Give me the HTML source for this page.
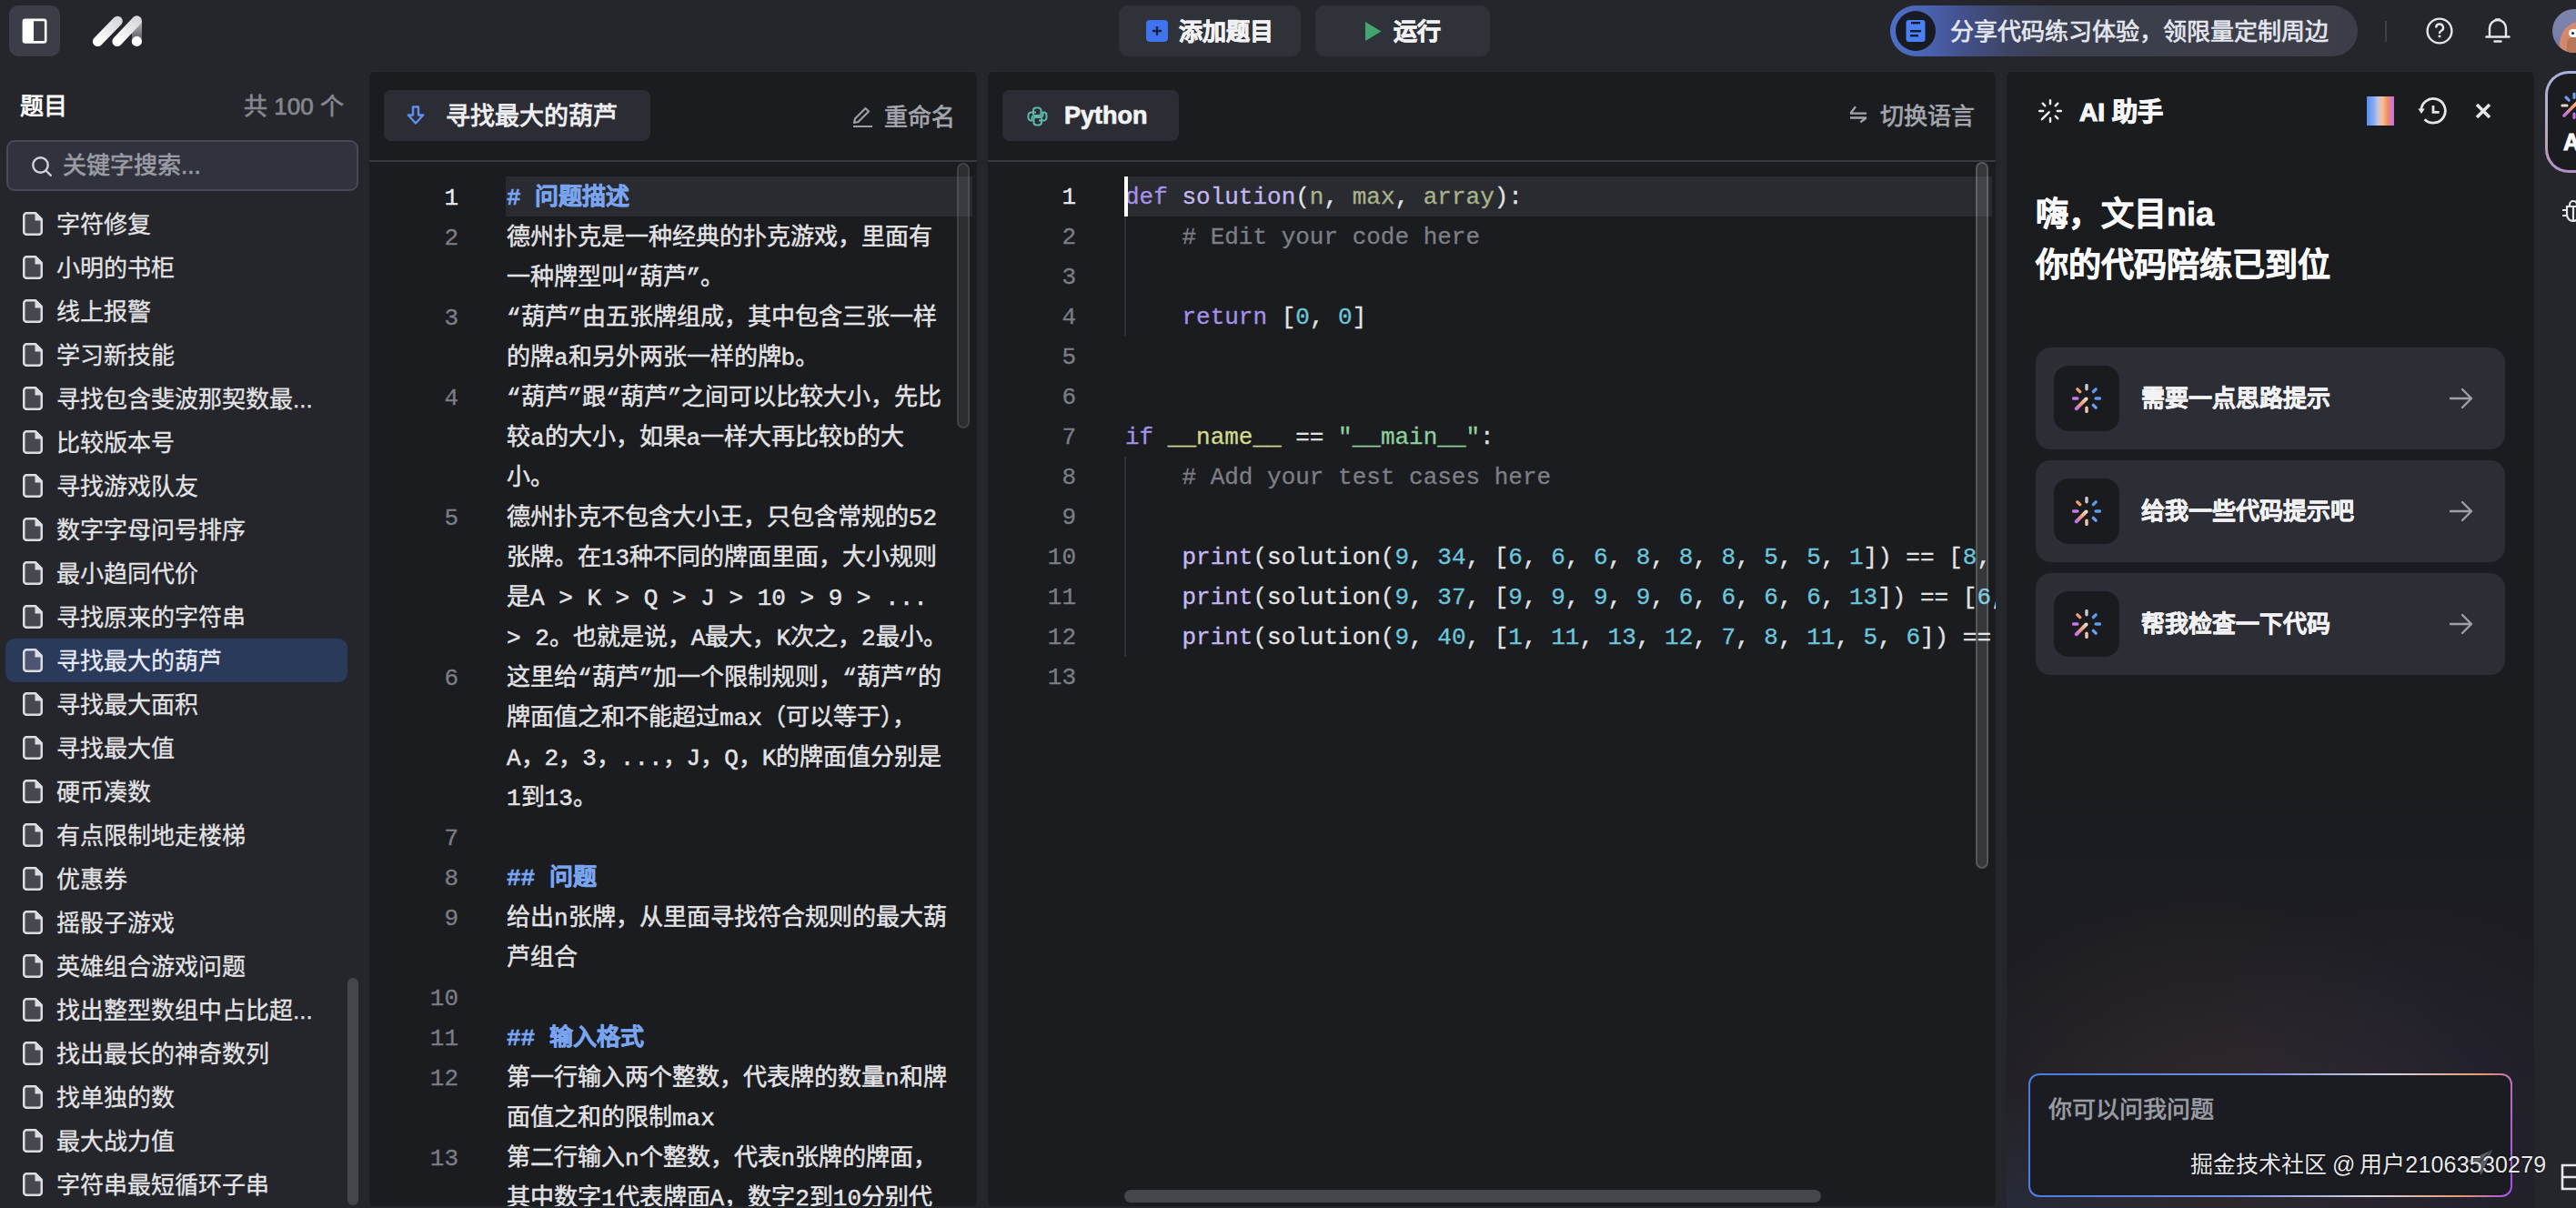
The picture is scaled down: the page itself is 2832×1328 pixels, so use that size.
<!DOCTYPE html>
<html lang="zh-CN"><head><meta charset="utf-8">
<style>
*{margin:0;padding:0;box-sizing:border-box}
html,body{width:2832px;height:1328px;overflow:hidden}
body{position:relative;background:#25262c;font-family:"Liberation Sans",sans-serif;color:#e6e6e8}
.a{position:absolute}
.sw{-webkit-text-stroke-width:0.7px}
.sb{-webkit-text-stroke-width:0.7px}
svg{display:block}
.btn{position:absolute;background:#30323a;border-radius:10px}
.panel{position:absolute;background:#1b1c20;border-radius:6px;overflow:hidden;box-shadow:inset 0 1px 0 #2a2b31}
.tab{position:absolute;background:#2c2d34;border-radius:8px}
.hdiv{position:absolute;left:0;right:0;top:98px;height:2px;background:#393a40}
.list .it{position:absolute;left:6px;width:376px;height:48px;border-radius:10px}
.list .it svg{position:absolute;left:19px;top:11px}
.list .it span{position:absolute;left:56px;top:1px;line-height:48px;font-size:26px;color:#e3e3e5;white-space:nowrap;-webkit-text-stroke-width:0.3px}
.list .it.sel{background:#293a5a}
.list .it.sel path:first-child{fill:#4d5572}
.list .it.sel span{color:#e6e9f6}
.md{position:absolute;left:0;top:118px;width:668px}
.md .r{position:absolute;left:0;height:44px;width:668px;line-height:44px;font-size:26px;font-family:"Liberation Mono",monospace;color:#e3e3e5;white-space:pre;-webkit-text-stroke-width:0.5px}
.md .n{-webkit-text-stroke-width:0.3px}
.md .n{position:absolute;right:570px;top:0;color:#7c7e85;text-align:right}
.md .t{position:absolute;left:151px;top:0}
.md .h{color:#78a4f0;font-weight:bold}
.code{position:absolute;left:0;top:117px;width:1108px}
.code .r{position:absolute;left:0;height:44px;width:1108px;line-height:44px;font-size:26px;font-family:"Liberation Mono",monospace;color:#e3e3e5;white-space:pre;-webkit-text-stroke-width:0.3px}
.code .n{position:absolute;right:1011px;top:0;color:#7c7e85;text-align:right}
.code .t{position:absolute;left:151px;top:0}
.kw{color:#a491e8}
.fn{color:#c4b8f3}
.pa{color:#a9b38a}
.cm{color:#7d7f86}
.nu{color:#6cc6dc}
.dn{color:#d3d88f}
.st{color:#8fcf9c}
.card{position:absolute;left:32px;width:516px;height:112px;background:#2c2d35;border-radius:16px}
.card .ib{position:absolute;left:20px;top:20px;width:72px;height:72px;border-radius:16px;background:#1a1b1f}
.card .ib svg{position:absolute;left:20px;top:20px}
.card span{position:absolute;left:116px;top:0;line-height:112px;font-size:26px;font-weight:bold;color:#f2f2f4;-webkit-text-stroke-width:0.5px}
.card .ar{position:absolute;left:454px;top:43px}
</style></head>
<body>

<!-- ===== TOP BAR ===== -->
<div class="btn" style="left:10px;top:6px;width:56px;height:56px;background:#3c3e47;border-radius:10px">
  <svg class="a" style="left:14px;top:14px" width="28" height="28" viewBox="0 0 28 28">
    <rect x="1.9" y="1.9" width="24.3" height="24.5" rx="2" fill="none" stroke="#fff" stroke-width="2.6"/>
    <rect x="1" y="1" width="12" height="26" rx="1.5" fill="#fff"/>
  </svg>
</div>
<svg class="a" style="left:95px;top:12px" width="70" height="44" viewBox="95 12 70 44">
  <defs>
    <linearGradient id="lg1" x1="0" y1="1" x2="1" y2="0"><stop offset="0" stop-color="#ffffff"/><stop offset="1" stop-color="#d9d9dd"/></linearGradient>
    <linearGradient id="lg2" x1="0" y1="0" x2="0" y2="1"><stop offset="0" stop-color="#b8b8bc"/><stop offset="1" stop-color="#55565b"/></linearGradient>
  </defs>
  <rect x="145" y="23" width="11" height="22" fill="url(#lg2)"/>
  <line x1="107.4" y1="45.6" x2="129.3" y2="23.2" stroke="url(#lg1)" stroke-width="11" stroke-linecap="round"/>
  <line x1="128.9" y1="45.6" x2="150.4" y2="22.8" stroke="url(#lg1)" stroke-width="11" stroke-linecap="round"/>
  <circle cx="150.4" cy="45.4" r="5.6" fill="#fff"/>
</svg>

<div class="btn" style="left:1230px;top:6px;width:200px;height:56px">
  <div class="a" style="left:30px;top:16px;width:24px;height:24px;background:#3f74ee;border-radius:4px"></div>
  <svg class="a" style="left:30px;top:16px" width="24" height="24" viewBox="0 0 24 24"><path d="M12 7v10M7 12h10" stroke="#1b2444" stroke-width="2.4"/></svg>
  <span class="a sb" style="left:66px;top:1px;line-height:56px;font-size:26px;font-weight:bold;color:#f2f2f4">添加题目</span>
</div>
<div class="btn" style="left:1446px;top:6px;width:192px;height:56px">
  <svg class="a" style="left:55px;top:18px" width="18" height="21" viewBox="0 0 18 21"><path d="M0 0L17.5 10.5L0 21Z" fill="#43a46f"/></svg>
  <span class="a sb" style="left:86px;top:1px;line-height:56px;font-size:26px;font-weight:bold;color:#f2f2f4">运行</span>
</div>

<div class="a" style="left:2078px;top:6px;width:514px;height:56px;border-radius:28px;background:linear-gradient(90deg,#4d6fca 0%,#4a64b4 7%,#42508a 16%,#3d4462 26%,#3b3e4d 36%,#3c3e47 100%)">
  <div class="a" style="left:6px;top:6px;width:44px;height:44px;border-radius:22px;background:#181a24"></div>
  <svg class="a" style="left:17px;top:15px" width="22" height="25" viewBox="0 0 22 25">
    <rect x="0.5" y="1" width="21" height="24" rx="3" fill="#4a80f6"/>
    <rect x="6" y="3" width="10" height="2.4" fill="#181a24"/>
    <rect x="5" y="12" width="12" height="2.4" fill="#181a24"/>
    <rect x="5" y="17" width="9" height="2.4" fill="#181a24"/>
  </svg>
  <span class="a sw" style="left:66px;top:1px;line-height:56px;font-size:26px;color:#e4e7ef">分享代码练习体验，领限量定制周边</span>
</div>
<div class="a" style="left:2622px;top:23px;width:2px;height:23px;background:#3e4047"></div>
<svg class="a" style="left:2666px;top:18px" width="32" height="32" viewBox="0 0 32 32">
  <circle cx="16" cy="16" r="13.4" fill="none" stroke="#e6e6e8" stroke-width="2.4"/>
  <path d="M12.2 12.4a3.9 3.9 0 1 1 5.8 3.4c-1.2.7-2 1.4-2 2.6v.6" fill="none" stroke="#e6e6e8" stroke-width="2.4" stroke-linecap="butt"/>
  <rect x="14.7" y="20.6" width="2.6" height="2.6" fill="#e6e6e8"/>
</svg>
<svg class="a" style="left:2731px;top:18px" width="30" height="30" viewBox="0 0 30 30">
  <path d="M6 22V13a9 9 0 0 1 18 0v9" fill="none" stroke="#e6e6e8" stroke-width="2.4"/>
  <path d="M2.5 22.5h25" stroke="#e6e6e8" stroke-width="2.4" stroke-linecap="round"/>
  <path d="M11.5 27.5h7" stroke="#e6e6e8" stroke-width="2.4" stroke-linecap="round"/>
  <path d="M13 3.5h4" stroke="#e6e6e8" stroke-width="2.4" stroke-linecap="round"/>
</svg>
<div class="a" style="left:2806px;top:10px;width:48px;height:48px;border-radius:24px;background:linear-gradient(160deg,#8085b0,#6f7aa0);overflow:hidden">
  <div class="a" style="left:8px;top:14px;width:44px;height:50px;border-radius:50%;background:#d3896a"></div>
  <div class="a" style="left:16px;top:30px;width:16px;height:24px;border-radius:8px;background:#b97658"></div>
  <div class="a" style="left:18px;top:22px;width:14px;height:9px;border-radius:5px;background:#fff"></div>
  <div class="a" style="left:21px;top:25px;width:3px;height:3px;border-radius:2px;background:#222"></div>
</div>

<!-- ===== SIDEBAR ===== -->
<span class="a" style="left:22px;top:99px;line-height:36px;font-size:26px;font-weight:bold;color:#fafafa">题目</span>
<span class="a sw" style="left:268px;top:99px;line-height:36px;font-size:26px;color:#85878e">共 100 个</span>
<div class="a" style="left:7px;top:154px;width:387px;height:56px;border-radius:9px;background:#30333d;border:2px solid #474a54"></div>
<svg class="a" style="left:34px;top:171px" width="24" height="24" viewBox="0 0 24 24">
  <circle cx="10.5" cy="10.5" r="8.2" fill="none" stroke="#d0d1d5" stroke-width="2.4"/>
  <path d="M17 17l4.8 4.8" stroke="#d0d1d5" stroke-width="2.4" stroke-linecap="round"/>
</svg>
<span class="a sw" style="left:69px;top:154px;line-height:56px;font-size:26px;color:#9a9ca3">关键字搜索...</span>

<div class="list">
<div class="it" style="top:222px"><svg width="22" height="26" viewBox="0 0 22 26"><path d="M4.25 1.25H14L20.75 8V21.75A3 3 0 0 1 17.75 24.75H4.25A3 3 0 0 1 1.25 21.75V4.25A3 3 0 0 1 4.25 1.25Z" fill="#47484f" stroke="#dcdde2" stroke-width="2.5" stroke-linejoin="round"/><path d="M13.5 1.5L20.5 8.5V9.5H13.5Z" fill="#dcdde2"/></svg><span>字符修复</span></div>
<div class="it" style="top:270px"><svg width="22" height="26" viewBox="0 0 22 26"><path d="M4.25 1.25H14L20.75 8V21.75A3 3 0 0 1 17.75 24.75H4.25A3 3 0 0 1 1.25 21.75V4.25A3 3 0 0 1 4.25 1.25Z" fill="#47484f" stroke="#dcdde2" stroke-width="2.5" stroke-linejoin="round"/><path d="M13.5 1.5L20.5 8.5V9.5H13.5Z" fill="#dcdde2"/></svg><span>小明的书柜</span></div>
<div class="it" style="top:318px"><svg width="22" height="26" viewBox="0 0 22 26"><path d="M4.25 1.25H14L20.75 8V21.75A3 3 0 0 1 17.75 24.75H4.25A3 3 0 0 1 1.25 21.75V4.25A3 3 0 0 1 4.25 1.25Z" fill="#47484f" stroke="#dcdde2" stroke-width="2.5" stroke-linejoin="round"/><path d="M13.5 1.5L20.5 8.5V9.5H13.5Z" fill="#dcdde2"/></svg><span>线上报警</span></div>
<div class="it" style="top:366px"><svg width="22" height="26" viewBox="0 0 22 26"><path d="M4.25 1.25H14L20.75 8V21.75A3 3 0 0 1 17.75 24.75H4.25A3 3 0 0 1 1.25 21.75V4.25A3 3 0 0 1 4.25 1.25Z" fill="#47484f" stroke="#dcdde2" stroke-width="2.5" stroke-linejoin="round"/><path d="M13.5 1.5L20.5 8.5V9.5H13.5Z" fill="#dcdde2"/></svg><span>学习新技能</span></div>
<div class="it" style="top:414px"><svg width="22" height="26" viewBox="0 0 22 26"><path d="M4.25 1.25H14L20.75 8V21.75A3 3 0 0 1 17.75 24.75H4.25A3 3 0 0 1 1.25 21.75V4.25A3 3 0 0 1 4.25 1.25Z" fill="#47484f" stroke="#dcdde2" stroke-width="2.5" stroke-linejoin="round"/><path d="M13.5 1.5L20.5 8.5V9.5H13.5Z" fill="#dcdde2"/></svg><span>寻找包含斐波那契数最...</span></div>
<div class="it" style="top:462px"><svg width="22" height="26" viewBox="0 0 22 26"><path d="M4.25 1.25H14L20.75 8V21.75A3 3 0 0 1 17.75 24.75H4.25A3 3 0 0 1 1.25 21.75V4.25A3 3 0 0 1 4.25 1.25Z" fill="#47484f" stroke="#dcdde2" stroke-width="2.5" stroke-linejoin="round"/><path d="M13.5 1.5L20.5 8.5V9.5H13.5Z" fill="#dcdde2"/></svg><span>比较版本号</span></div>
<div class="it" style="top:510px"><svg width="22" height="26" viewBox="0 0 22 26"><path d="M4.25 1.25H14L20.75 8V21.75A3 3 0 0 1 17.75 24.75H4.25A3 3 0 0 1 1.25 21.75V4.25A3 3 0 0 1 4.25 1.25Z" fill="#47484f" stroke="#dcdde2" stroke-width="2.5" stroke-linejoin="round"/><path d="M13.5 1.5L20.5 8.5V9.5H13.5Z" fill="#dcdde2"/></svg><span>寻找游戏队友</span></div>
<div class="it" style="top:558px"><svg width="22" height="26" viewBox="0 0 22 26"><path d="M4.25 1.25H14L20.75 8V21.75A3 3 0 0 1 17.75 24.75H4.25A3 3 0 0 1 1.25 21.75V4.25A3 3 0 0 1 4.25 1.25Z" fill="#47484f" stroke="#dcdde2" stroke-width="2.5" stroke-linejoin="round"/><path d="M13.5 1.5L20.5 8.5V9.5H13.5Z" fill="#dcdde2"/></svg><span>数字字母问号排序</span></div>
<div class="it" style="top:606px"><svg width="22" height="26" viewBox="0 0 22 26"><path d="M4.25 1.25H14L20.75 8V21.75A3 3 0 0 1 17.75 24.75H4.25A3 3 0 0 1 1.25 21.75V4.25A3 3 0 0 1 4.25 1.25Z" fill="#47484f" stroke="#dcdde2" stroke-width="2.5" stroke-linejoin="round"/><path d="M13.5 1.5L20.5 8.5V9.5H13.5Z" fill="#dcdde2"/></svg><span>最小趋同代价</span></div>
<div class="it" style="top:654px"><svg width="22" height="26" viewBox="0 0 22 26"><path d="M4.25 1.25H14L20.75 8V21.75A3 3 0 0 1 17.75 24.75H4.25A3 3 0 0 1 1.25 21.75V4.25A3 3 0 0 1 4.25 1.25Z" fill="#47484f" stroke="#dcdde2" stroke-width="2.5" stroke-linejoin="round"/><path d="M13.5 1.5L20.5 8.5V9.5H13.5Z" fill="#dcdde2"/></svg><span>寻找原来的字符串</span></div>
<div class="it sel" style="top:702px"><svg width="22" height="26" viewBox="0 0 22 26"><path d="M4.25 1.25H14L20.75 8V21.75A3 3 0 0 1 17.75 24.75H4.25A3 3 0 0 1 1.25 21.75V4.25A3 3 0 0 1 4.25 1.25Z" fill="#47484f" stroke="#dcdde2" stroke-width="2.5" stroke-linejoin="round"/><path d="M13.5 1.5L20.5 8.5V9.5H13.5Z" fill="#dcdde2"/></svg><span>寻找最大的葫芦</span></div>
<div class="it" style="top:750px"><svg width="22" height="26" viewBox="0 0 22 26"><path d="M4.25 1.25H14L20.75 8V21.75A3 3 0 0 1 17.75 24.75H4.25A3 3 0 0 1 1.25 21.75V4.25A3 3 0 0 1 4.25 1.25Z" fill="#47484f" stroke="#dcdde2" stroke-width="2.5" stroke-linejoin="round"/><path d="M13.5 1.5L20.5 8.5V9.5H13.5Z" fill="#dcdde2"/></svg><span>寻找最大面积</span></div>
<div class="it" style="top:798px"><svg width="22" height="26" viewBox="0 0 22 26"><path d="M4.25 1.25H14L20.75 8V21.75A3 3 0 0 1 17.75 24.75H4.25A3 3 0 0 1 1.25 21.75V4.25A3 3 0 0 1 4.25 1.25Z" fill="#47484f" stroke="#dcdde2" stroke-width="2.5" stroke-linejoin="round"/><path d="M13.5 1.5L20.5 8.5V9.5H13.5Z" fill="#dcdde2"/></svg><span>寻找最大值</span></div>
<div class="it" style="top:846px"><svg width="22" height="26" viewBox="0 0 22 26"><path d="M4.25 1.25H14L20.75 8V21.75A3 3 0 0 1 17.75 24.75H4.25A3 3 0 0 1 1.25 21.75V4.25A3 3 0 0 1 4.25 1.25Z" fill="#47484f" stroke="#dcdde2" stroke-width="2.5" stroke-linejoin="round"/><path d="M13.5 1.5L20.5 8.5V9.5H13.5Z" fill="#dcdde2"/></svg><span>硬币凑数</span></div>
<div class="it" style="top:894px"><svg width="22" height="26" viewBox="0 0 22 26"><path d="M4.25 1.25H14L20.75 8V21.75A3 3 0 0 1 17.75 24.75H4.25A3 3 0 0 1 1.25 21.75V4.25A3 3 0 0 1 4.25 1.25Z" fill="#47484f" stroke="#dcdde2" stroke-width="2.5" stroke-linejoin="round"/><path d="M13.5 1.5L20.5 8.5V9.5H13.5Z" fill="#dcdde2"/></svg><span>有点限制地走楼梯</span></div>
<div class="it" style="top:942px"><svg width="22" height="26" viewBox="0 0 22 26"><path d="M4.25 1.25H14L20.75 8V21.75A3 3 0 0 1 17.75 24.75H4.25A3 3 0 0 1 1.25 21.75V4.25A3 3 0 0 1 4.25 1.25Z" fill="#47484f" stroke="#dcdde2" stroke-width="2.5" stroke-linejoin="round"/><path d="M13.5 1.5L20.5 8.5V9.5H13.5Z" fill="#dcdde2"/></svg><span>优惠券</span></div>
<div class="it" style="top:990px"><svg width="22" height="26" viewBox="0 0 22 26"><path d="M4.25 1.25H14L20.75 8V21.75A3 3 0 0 1 17.75 24.75H4.25A3 3 0 0 1 1.25 21.75V4.25A3 3 0 0 1 4.25 1.25Z" fill="#47484f" stroke="#dcdde2" stroke-width="2.5" stroke-linejoin="round"/><path d="M13.5 1.5L20.5 8.5V9.5H13.5Z" fill="#dcdde2"/></svg><span>摇骰子游戏</span></div>
<div class="it" style="top:1038px"><svg width="22" height="26" viewBox="0 0 22 26"><path d="M4.25 1.25H14L20.75 8V21.75A3 3 0 0 1 17.75 24.75H4.25A3 3 0 0 1 1.25 21.75V4.25A3 3 0 0 1 4.25 1.25Z" fill="#47484f" stroke="#dcdde2" stroke-width="2.5" stroke-linejoin="round"/><path d="M13.5 1.5L20.5 8.5V9.5H13.5Z" fill="#dcdde2"/></svg><span>英雄组合游戏问题</span></div>
<div class="it" style="top:1086px"><svg width="22" height="26" viewBox="0 0 22 26"><path d="M4.25 1.25H14L20.75 8V21.75A3 3 0 0 1 17.75 24.75H4.25A3 3 0 0 1 1.25 21.75V4.25A3 3 0 0 1 4.25 1.25Z" fill="#47484f" stroke="#dcdde2" stroke-width="2.5" stroke-linejoin="round"/><path d="M13.5 1.5L20.5 8.5V9.5H13.5Z" fill="#dcdde2"/></svg><span>找出整型数组中占比超...</span></div>
<div class="it" style="top:1134px"><svg width="22" height="26" viewBox="0 0 22 26"><path d="M4.25 1.25H14L20.75 8V21.75A3 3 0 0 1 17.75 24.75H4.25A3 3 0 0 1 1.25 21.75V4.25A3 3 0 0 1 4.25 1.25Z" fill="#47484f" stroke="#dcdde2" stroke-width="2.5" stroke-linejoin="round"/><path d="M13.5 1.5L20.5 8.5V9.5H13.5Z" fill="#dcdde2"/></svg><span>找出最长的神奇数列</span></div>
<div class="it" style="top:1182px"><svg width="22" height="26" viewBox="0 0 22 26"><path d="M4.25 1.25H14L20.75 8V21.75A3 3 0 0 1 17.75 24.75H4.25A3 3 0 0 1 1.25 21.75V4.25A3 3 0 0 1 4.25 1.25Z" fill="#47484f" stroke="#dcdde2" stroke-width="2.5" stroke-linejoin="round"/><path d="M13.5 1.5L20.5 8.5V9.5H13.5Z" fill="#dcdde2"/></svg><span>找单独的数</span></div>
<div class="it" style="top:1230px"><svg width="22" height="26" viewBox="0 0 22 26"><path d="M4.25 1.25H14L20.75 8V21.75A3 3 0 0 1 17.75 24.75H4.25A3 3 0 0 1 1.25 21.75V4.25A3 3 0 0 1 4.25 1.25Z" fill="#47484f" stroke="#dcdde2" stroke-width="2.5" stroke-linejoin="round"/><path d="M13.5 1.5L20.5 8.5V9.5H13.5Z" fill="#dcdde2"/></svg><span>最大战力值</span></div>
<div class="it" style="top:1278px"><svg width="22" height="26" viewBox="0 0 22 26"><path d="M4.25 1.25H14L20.75 8V21.75A3 3 0 0 1 17.75 24.75H4.25A3 3 0 0 1 1.25 21.75V4.25A3 3 0 0 1 4.25 1.25Z" fill="#47484f" stroke="#dcdde2" stroke-width="2.5" stroke-linejoin="round"/><path d="M13.5 1.5L20.5 8.5V9.5H13.5Z" fill="#dcdde2"/></svg><span>字符串最短循环子串</span></div>
</div>

<div class="a" style="left:382px;top:1075px;width:12px;height:250px;border-radius:6px;background:#45464c"></div>

<!-- ===== PANEL 1 (markdown) ===== -->
<div class="panel" style="left:406px;top:78px;width:668px;height:1248px">
  <div class="tab" style="left:16px;top:21px;width:293px;height:56px">
    <svg class="a" style="left:23px;top:16px" width="24" height="24" viewBox="0 0 24 24"><path d="M9 2.5h6v9h5.2L12 20.5 3.8 11.5H9z" fill="none" stroke="#5d8ff0" stroke-width="2.4" stroke-linejoin="round"/></svg>
    <span class="a" style="left:68px;top:1px;line-height:56px;font-size:27px;font-weight:bold;color:#eeeef0">寻找最大的葫芦</span>
  </div>
  <svg class="a" style="left:530px;top:38px" width="25" height="25" viewBox="0 0 25 25"><path d="M3 19l1-4.5L15.5 3l3.5 3.5L7.5 18z" fill="none" stroke="#9c9ea5" stroke-width="2.2" stroke-linejoin="round"/><path d="M2 23h21" stroke="#9c9ea5" stroke-width="2.2"/></svg>
  <span class="a sw" style="left:566px;top:23px;line-height:56px;font-size:26px;color:#a4a6ad">重命名</span>
  <div class="hdiv"></div>
  <div class="a" style="left:150px;top:116px;width:513px;height:44px;background:#2a2b31"></div>
  <div class="a" style="left:646px;top:101px;width:14px;height:292px;border-radius:7px;background:rgba(255,255,255,0.08);border:2px solid rgba(255,255,255,0.10)"></div>
  <div class="md" id="md">
<div class="r" style="top:0px"><span class="n" style="color:#ececee">1</span><span class="t"><span class="h"># 问题描述</span></span></div>
<div class="r" style="top:44px"><span class="n">2</span><span class="t">德州扑克是一种经典的扑克游戏，里面有</span></div>
<div class="r" style="top:88px"><span class="n"></span><span class="t">一种牌型叫“葫芦”。</span></div>
<div class="r" style="top:132px"><span class="n">3</span><span class="t">“葫芦”由五张牌组成，其中包含三张一样</span></div>
<div class="r" style="top:176px"><span class="n"></span><span class="t">的牌a和另外两张一样的牌b。</span></div>
<div class="r" style="top:220px"><span class="n">4</span><span class="t">“葫芦”跟“葫芦”之间可以比较大小，先比</span></div>
<div class="r" style="top:264px"><span class="n"></span><span class="t">较a的大小，如果a一样大再比较b的大</span></div>
<div class="r" style="top:308px"><span class="n"></span><span class="t">小。</span></div>
<div class="r" style="top:352px"><span class="n">5</span><span class="t">德州扑克不包含大小王，只包含常规的52</span></div>
<div class="r" style="top:396px"><span class="n"></span><span class="t">张牌。在13种不同的牌面里面，大小规则</span></div>
<div class="r" style="top:440px"><span class="n"></span><span class="t">是A &gt; K &gt; Q &gt; J &gt; 10 &gt; 9 &gt; ...</span></div>
<div class="r" style="top:484px"><span class="n"></span><span class="t">&gt; 2。也就是说，A最大，K次之，2最小。</span></div>
<div class="r" style="top:528px"><span class="n">6</span><span class="t">这里给“葫芦”加一个限制规则，“葫芦”的</span></div>
<div class="r" style="top:572px"><span class="n"></span><span class="t">牌面值之和不能超过max（可以等于），</span></div>
<div class="r" style="top:616px"><span class="n"></span><span class="t">A，2，3，...，J，Q，K的牌面值分别是</span></div>
<div class="r" style="top:660px"><span class="n"></span><span class="t">1到13。</span></div>
<div class="r" style="top:704px"><span class="n">7</span><span class="t"></span></div>
<div class="r" style="top:748px"><span class="n">8</span><span class="t"><span class="h">## 问题</span></span></div>
<div class="r" style="top:792px"><span class="n">9</span><span class="t">给出n张牌，从里面寻找符合规则的最大葫</span></div>
<div class="r" style="top:836px"><span class="n"></span><span class="t">芦组合</span></div>
<div class="r" style="top:880px"><span class="n">10</span><span class="t"></span></div>
<div class="r" style="top:924px"><span class="n">11</span><span class="t"><span class="h">## 输入格式</span></span></div>
<div class="r" style="top:968px"><span class="n">12</span><span class="t">第一行输入两个整数，代表牌的数量n和牌</span></div>
<div class="r" style="top:1012px"><span class="n"></span><span class="t">面值之和的限制max</span></div>
<div class="r" style="top:1056px"><span class="n">13</span><span class="t">第二行输入n个整数，代表n张牌的牌面，</span></div>
<div class="r" style="top:1100px"><span class="n"></span><span class="t">其中数字1代表牌面A，数字2到10分别代</span></div>
</div>
</div>

<!-- ===== PANEL 2 (code) ===== -->
<div class="panel" style="left:1086px;top:78px;width:1108px;height:1248px">
  <div class="tab" style="left:16px;top:21px;width:194px;height:56px">
    <svg class="a" style="left:27px;top:18px" width="23" height="22" viewBox="0 0 23 22"><g fill="none" stroke="#5fb8b0" stroke-width="2" stroke-linejoin="round"><path d="M7 9V4.5A3 3 0 0 1 10 1.5h2.5A3 3 0 0 1 15.5 4.5V8a2 2 0 0 1-2 2H8.5A3 3 0 0 0 5.5 13v2.5H4.5A3 3 0 0 1 1.5 12.5V9.5A3 3 0 0 1 4.5 6.5H10"/><path d="M16 13v4.5a3 3 0 0 1-3 3H10.5a3 3 0 0 1-3-3V14a2 2 0 0 1 2-2h5a3 3 0 0 0 3-3V6.5h1a3 3 0 0 1 3 3v3a3 3 0 0 1-3 3H13"/></g></svg>
    <span class="a sb" style="left:68px;top:0;line-height:56px;font-size:27px;font-weight:bold;color:#f4f4f6">Python</span>
  </div>
  <svg class="a" style="left:944px;top:34px" width="26" height="26" viewBox="0 0 26 26"><path d="M4 12.6H22M4.3 12.6L10 5.3M4 17.5H22M21.7 17.5L15.3 22.4" fill="none" stroke="#a2a4ab" stroke-width="2.3"/></svg>
  <span class="a sw" style="left:981px;top:22px;line-height:56px;font-size:26px;color:#a4a6ad">切换语言</span>
  <div class="hdiv"></div>
  <div class="a" style="left:150px;top:116px;width:954px;height:44px;background:#2a2b31"></div>
  <div class="a" style="left:150px;top:160px;width:2px;height:131px;background:#303137"></div>
  <div class="a" style="left:150px;top:424px;width:2px;height:220px;background:#303137"></div>
  <div class="code" id="code">
<div class="r" style="top:0px"><span class="n" style="color:#ececee">1</span><span class="t"><span class="kw">def</span> <span class="fn">solution</span>(<span class="pa">n</span>, <span class="pa">max</span>, <span class="pa">array</span>):</span></div>
<div class="r" style="top:44px"><span class="n">2</span><span class="t">    <span class="cm"># Edit your code here</span></span></div>
<div class="r" style="top:88px"><span class="n">3</span><span class="t"></span></div>
<div class="r" style="top:132px"><span class="n">4</span><span class="t">    <span class="kw">return</span> [<span class="nu">0</span>, <span class="nu">0</span>]</span></div>
<div class="r" style="top:176px"><span class="n">5</span><span class="t"></span></div>
<div class="r" style="top:220px"><span class="n">6</span><span class="t"></span></div>
<div class="r" style="top:264px"><span class="n">7</span><span class="t"><span class="kw">if</span> <span class="dn">__name__</span> == <span class="st">"__main__"</span>:</span></div>
<div class="r" style="top:308px"><span class="n">8</span><span class="t">    <span class="cm"># Add your test cases here</span></span></div>
<div class="r" style="top:352px"><span class="n">9</span><span class="t"></span></div>
<div class="r" style="top:396px"><span class="n">10</span><span class="t">    <span class="fn">print</span>(solution(<span class="nu">9</span>, <span class="nu">34</span>, [<span class="nu">6</span>, <span class="nu">6</span>, <span class="nu">6</span>, <span class="nu">8</span>, <span class="nu">8</span>, <span class="nu">8</span>, <span class="nu">5</span>, <span class="nu">5</span>, <span class="nu">1</span>]) == [<span class="nu">8</span>, <span class="nu">5</span>])</span></div>
<div class="r" style="top:440px"><span class="n">11</span><span class="t">    <span class="fn">print</span>(solution(<span class="nu">9</span>, <span class="nu">37</span>, [<span class="nu">9</span>, <span class="nu">9</span>, <span class="nu">9</span>, <span class="nu">9</span>, <span class="nu">6</span>, <span class="nu">6</span>, <span class="nu">6</span>, <span class="nu">6</span>, <span class="nu">13</span>]) == [<span class="nu">6</span>, <span class="nu">9</span>])</span></div>
<div class="r" style="top:484px"><span class="n">12</span><span class="t">    <span class="fn">print</span>(solution(<span class="nu">9</span>, <span class="nu">40</span>, [<span class="nu">1</span>, <span class="nu">11</span>, <span class="nu">13</span>, <span class="nu">12</span>, <span class="nu">7</span>, <span class="nu">8</span>, <span class="nu">11</span>, <span class="nu">5</span>, <span class="nu">6</span>]) == [<span class="nu">0</span>, <span class="nu">0</span>])</span></div>
<div class="r" style="top:528px"><span class="n">13</span><span class="t"></span></div>
</div>
  <div class="a" style="left:150px;top:116px;width:4px;height:44px;background:#fff"></div>
  <div class="a" style="left:1086px;top:100px;width:14px;height:777px;border-radius:7px;background:rgba(255,255,255,0.12);border:2px solid rgba(255,255,255,0.16)"></div>
  <div class="a" style="left:150px;top:1230px;width:766px;height:14px;border-radius:7px;background:#45464b"></div>
</div>

<!-- ===== AI PANEL ===== -->
<div class="panel" style="left:2206px;top:78px;width:580px;height:1260px;border-radius:6px 6px 0 0;background:radial-gradient(ellipse 300px 260px at 38% 92%,rgba(64,50,54,0.55),rgba(64,50,54,0) 100%),radial-gradient(ellipse 260px 260px at 76% 92%,rgba(52,44,70,0.38),rgba(52,44,70,0) 100%),radial-gradient(ellipse 220px 140px at 0% 100%,rgba(50,70,110,0.3),rgba(50,70,110,0) 100%),linear-gradient(180deg,#1b1c20 0%,#1b1c20 62%,#1f1f25 100%)">
  <svg class="a" style="left:34px;top:30px" width="28" height="28" viewBox="0 0 32 32" id="sparkw"><g stroke="#f0f0f2" stroke-width="2.8" stroke-linecap="round"><path d="M16 2.5v4.5M29.5 16h-4.5M16 29.5v-4.5M2.5 16h4.5M25.5 6.5l-3 3M25.5 25.5l-3-3M6.5 6.5l3 3M5.5 26.5l9-9"/></g></svg>
  <span class="a sb" style="left:80px;top:26px;line-height:40px;font-size:28px;font-weight:bold;-webkit-text-stroke-width:1.2px;color:#f6f6f8">AI 助手</span>
  <div class="a" style="left:396px;top:28px;width:30px;height:32px;background:linear-gradient(90deg,#5a8cf5 0%,#86aaf2 25%,#c9c6dc 42%,#f6c08e 58%,#f08c62 76%,#c470f2 100%)"></div>
  <svg class="a" style="left:450px;top:26px" width="34" height="34" viewBox="0 0 34 34"><path d="M9.6 27.2A13.3 13.3 0 1 0 5.7 17.8" fill="none" stroke="#e6e6e8" stroke-width="2.8"/><path d="M2.4 15.6h7.4L6 21z" fill="#e6e6e8"/><path d="M19 12v7.4h6.6" fill="none" stroke="#e6e6e8" stroke-width="2.8"/></svg>
  <svg class="a" style="left:514px;top:34px" width="20" height="20" viewBox="0 0 20 20"><path d="M3 3L17 17M17 3L3 17" stroke="#e6e6e8" stroke-width="3.6"/></svg>
  <div class="a sb" style="left:32px;top:130px;font-size:36px;font-weight:bold;line-height:56px;color:#fafafa;white-space:nowrap">嗨，文目nia<br>你的代码陪练已到位</div>

  <div class="card" style="top:304px"><div class="ib"><svg width="32" height="32" viewBox="1 1 30 30"><use href="#sparkc"/></svg></div><span>需要一点思路提示</span><svg class="ar" width="28" height="26" viewBox="0 0 28 26"><path d="M2 13h23M15 3l10 10-10 10" fill="none" stroke="#9fa1a8" stroke-width="2.4" stroke-linecap="round" stroke-linejoin="round"/></svg></div>
  <div class="card" style="top:428px"><div class="ib"><svg width="32" height="32" viewBox="1 1 30 30"><use href="#sparkc"/></svg></div><span>给我一些代码提示吧</span><svg class="ar" width="28" height="26" viewBox="0 0 28 26"><path d="M2 13h23M15 3l10 10-10 10" fill="none" stroke="#9fa1a8" stroke-width="2.4" stroke-linecap="round" stroke-linejoin="round"/></svg></div>
  <div class="card" style="top:552px"><div class="ib"><svg width="32" height="32" viewBox="1 1 30 30"><use href="#sparkc"/></svg></div><span>帮我检查一下代码</span><svg class="ar" width="28" height="26" viewBox="0 0 28 26"><path d="M2 13h23M15 3l10 10-10 10" fill="none" stroke="#9fa1a8" stroke-width="2.4" stroke-linecap="round" stroke-linejoin="round"/></svg></div>

  <div class="a" style="left:24px;top:1102px;width:532px;height:136px;border-radius:12px;padding:2px;background:linear-gradient(100deg,#4a7be0 0%,#6d8de0 45%,#d9d5de 72%,#e6996c 90%,#9d4ff0 100%)">
    <div style="width:100%;height:100%;border-radius:10px;background:#1b1c21"></div>
  </div>
  <span class="a sw" style="left:46px;top:1127px;line-height:30px;font-size:26px;color:#9c9ea5">你可以问我问题</span>
  <svg class="a" style="left:503px;top:1183px" width="34" height="34" viewBox="0 0 34 34"><path d="M31 3L3 15.5l11 3.5 4.5 12z" fill="#5f6168"/><path d="M31 3L14 19" stroke="#3a3b42" stroke-width="1.5"/></svg>
</div>

<!-- watermark -->
<span class="a" style="left:2408px;top:1263px;line-height:34px;font-size:25px;color:#e8e8ea;text-shadow:0 0 2px #000;white-space:nowrap">掘金技术社区<span style="letter-spacing:-1px"> @ </span>用户<span style="letter-spacing:0.2px">21063530279</span></span>

<!-- ===== RIGHT STRIP ===== -->
<div class="a" style="left:2798px;top:78px;width:80px;height:112px;border-radius:26px;padding:3px;background:linear-gradient(180deg,#a9b1da 0%,#b3acc8 45%,#bba2b4 70%,#b090c8 100%)">
  <div style="width:100%;height:100%;border-radius:23px;background:#1b1c20"></div>
</div>
<svg class="a" style="left:2814px;top:100px" width="32" height="32" viewBox="0 0 32 32"><defs><linearGradient id="gw2" x1="0" y1="1" x2="1" y2="0"><stop offset="0" stop-color="#c06ee8"/><stop offset="0.6" stop-color="#f0a070"/><stop offset="1" stop-color="#f6c49a"/></linearGradient></defs><g stroke-width="3.2" stroke-linecap="round"><path d="M3 16h5" stroke="#e6d6c6"/><path d="M7 7l3.2 3.2" stroke="#6f9cf0"/><path d="M16 3v4.5" stroke="#6f9cf0"/><path d="M16 25v4.5" stroke="#c070e0"/><path d="M5 27L21 11" stroke="url(#gw2)" stroke-width="3.6"/></g></svg>
<span class="a" style="left:2818px;top:142px;line-height:28px;font-size:25px;font-weight:bold;color:#fafafa;-webkit-text-stroke-width:1px">A</span>
<svg class="a" style="left:2816px;top:218px" width="24" height="26" viewBox="0 0 24 26"><path d="M6 9h14v9a7 7 0 0 1-14 0z M9 9V7a4 4 0 0 1 8 0v2 M1 13h5 M1 19h5 M13 9v16" fill="none" stroke="#e6e6e8" stroke-width="2.2"/></svg>
<svg class="a" style="left:2815px;top:1279px" width="22" height="30" viewBox="0 0 22 30"><path d="M2 2h22v26H2z M2 15h22" fill="none" stroke="#e6e6e8" stroke-width="2.6"/></svg>

<svg width="0" height="0" style="position:absolute">
  <defs>
    <linearGradient id="gw" x1="0" y1="1" x2="1" y2="0"><stop offset="0" stop-color="#c070f0"/><stop offset="0.45" stop-color="#f09a72"/><stop offset="1" stop-color="#f0d8c8"/></linearGradient>
    <g id="sparkc" stroke-width="3.2" stroke-linecap="round">
      <path d="M16 2.5v4" stroke="#c9c9cf"/>
      <path d="M25.5 6.5l-2.6 2.6" stroke="#5b9cf0"/>
      <path d="M29.5 16h-4" stroke="#5b9cf0"/>
      <path d="M25.5 25.5l-2.6-2.6" stroke="#6aa0f0"/>
      <path d="M16 29.5v-4" stroke="#f0c4b0"/>
      <path d="M6.5 6.5l2.6 2.6" stroke="#f0a06e"/>
      <path d="M2.5 16h4" stroke="#c77ae8"/>
      <path d="M5.5 26.5l10-10" stroke="url(#gw)" stroke-width="3.8"/>
    </g>
  </defs>
</svg>

</body></html>
